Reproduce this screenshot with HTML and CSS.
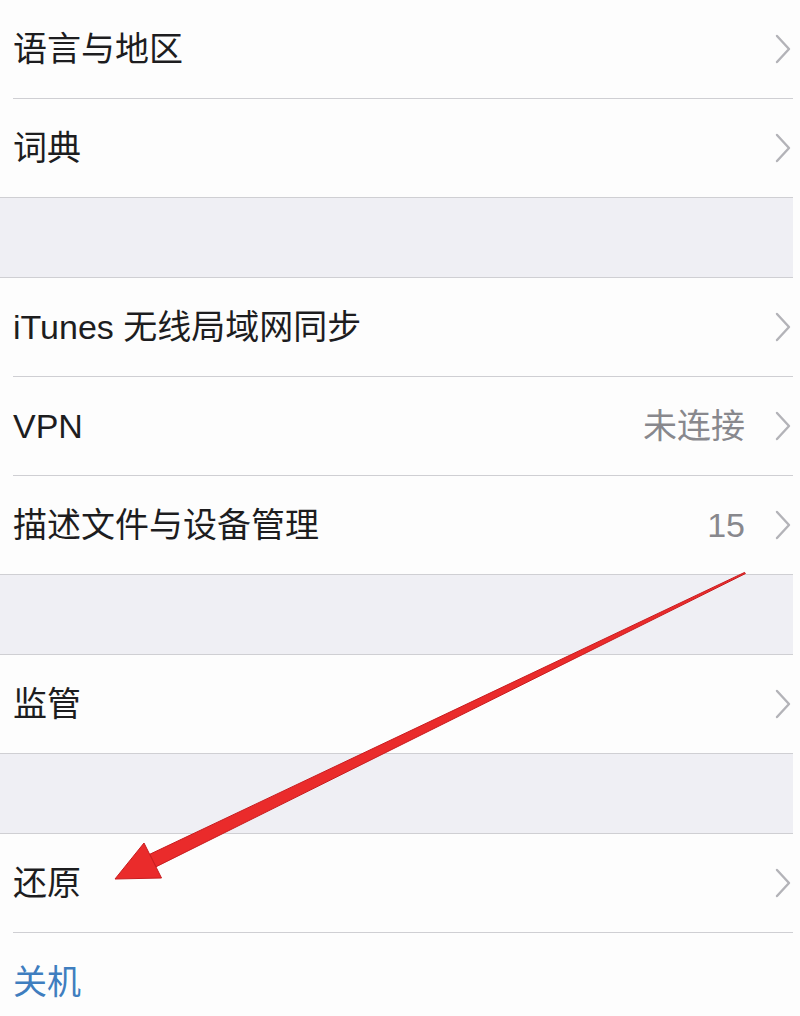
FILE: index.html
```html
<!DOCTYPE html>
<html lang="zh-CN">
<head>
<meta charset="utf-8">
<title>通用</title>
<link rel="stylesheet" href="styles.css">
</head>
<body>
<div class="screen">
  <div class="group">
    <div class="cell"><span class="label">语言与地区</span><span class="accessory"><svg class="chevron" viewBox="0 0 16 30"><polyline points="2,2 14,15 2,28"/></svg></span></div>
    <div class="cell"><span class="label">词典</span><span class="accessory"><svg class="chevron" viewBox="0 0 16 30"><polyline points="2,2 14,15 2,28"/></svg></span></div>
  </div>
  <div class="gap"></div>
  <div class="group">
    <div class="cell"><span class="label">iTunes 无线局域网同步</span><span class="accessory"><svg class="chevron" viewBox="0 0 16 30"><polyline points="2,2 14,15 2,28"/></svg></span></div>
    <div class="cell"><span class="label">VPN</span><span class="accessory"><span class="value">未连接</span><svg class="chevron" viewBox="0 0 16 30"><polyline points="2,2 14,15 2,28"/></svg></span></div>
    <div class="cell"><span class="label">描述文件与设备管理</span><span class="accessory"><span class="value">15</span><svg class="chevron" viewBox="0 0 16 30"><polyline points="2,2 14,15 2,28"/></svg></span></div>
  </div>
  <div class="gap"></div>
  <div class="group">
    <div class="cell"><span class="label">监管</span><span class="accessory"><svg class="chevron" viewBox="0 0 16 30"><polyline points="2,2 14,15 2,28"/></svg></span></div>
  </div>
  <div class="gap"></div>
  <div class="group">
    <div class="cell"><span class="label">还原</span><span class="accessory"><svg class="chevron" viewBox="0 0 16 30"><polyline points="2,2 14,15 2,28"/></svg></span></div>
    <div class="cell"><span class="label action">关机</span></div>
  </div>

  <!-- red annotation arrow pointing at 还原 -->
  <svg class="annotation" viewBox="0 0 800 1016" width="800" height="1016">
    <polygon class="arrow-shaft" points="745.4,573.6 744.6,572.4 149.7,854.3 155.8,866.9"/>
    <polygon class="arrow-head" points="115,879 144,843 161.5,878"/>
  </svg>
</div>
</body>
</html>
```

FILE: styles.css
```css
* {
  box-sizing: border-box;
}

html, body {
  margin: 0;
  padding: 0;
  background: #fdfdfd;
}

body {
  font-family: "Liberation Sans", "Noto Sans CJK SC", sans-serif;
  color: #1d1d1f;
  overflow: hidden;
}

.screen {
  position: relative;
  width: 800px;
  height: 1016px;
  padding-right: 7px;
  overflow: hidden;
}

.group {
  background: #fdfdfd;
}

.cell {
  height: 98px;
  padding: 0 2px 0 13px;
  display: flex;
  align-items: center;
  justify-content: space-between;
  position: relative;
}

.cell + .cell {
  margin-top: 1px;
}

.cell + .cell::before {
  content: "";
  position: absolute;
  left: 13px;
  right: 0;
  top: -1px;
  height: 1px;
  background: #cfcfd3;
}

.label {
  font-size: 34px;
  line-height: 1;
  letter-spacing: 0;
}

.label.action {
  color: #3f7ebf;
}

.accessory {
  display: flex;
  align-items: center;
  gap: 30px;
}

.value {
  font-size: 34px;
  line-height: 1;
  color: #88888d;
}

.chevron {
  width: 16px;
  height: 30px;
  display: block;
}

.chevron polyline {
  fill: none;
  stroke: #b3b3b8;
  stroke-width: 2.4;
  stroke-linecap: round;
  stroke-linejoin: round;
}

.gap {
  height: 81px;
  background: #efeff4;
  border-top: 1px solid #cfcfd3;
  border-bottom: 1px solid #cfcfd3;
}

.annotation {
  position: absolute;
  left: 0;
  top: 0;
  pointer-events: none;
}

.arrow-shaft,
.arrow-head {
  fill: #ea2b2b;
  stroke: #c81c1f;
  stroke-width: 1;
  stroke-linejoin: round;
}
```
